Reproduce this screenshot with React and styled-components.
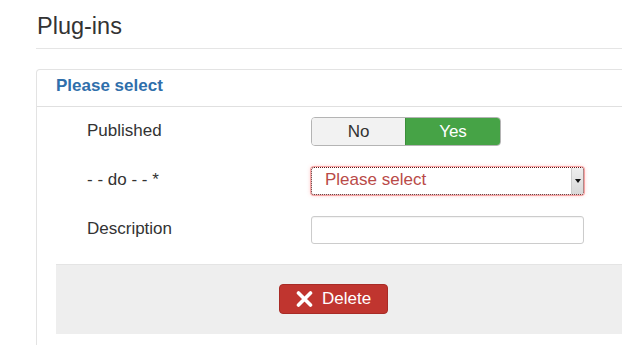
import React from "react";
import styled, { createGlobalStyle } from "styled-components";

const Global = createGlobalStyle`
  html, body { margin: 0; padding: 0; background: #fff; overflow: hidden; }
  body { font-family: "Liberation Sans", Arial, sans-serif; color: #333; }
`;

const Page = styled.div`
  width: 622px;
  height: 345px;
  overflow: hidden;
  padding: 11px 0 0 36px;
  box-sizing: border-box;
`;

const Title = styled.h1`
  margin: 0 0 0 1px;
  font-size: 23.5px;
  font-weight: 400;
  line-height: 30px;
  color: #333;
`;

const Rule = styled.div`
  height: 1px;
  background: #e5e5e5;
  margin: 7px -10px 20px 0;
`;

const Panel = styled.section`
  width: 640px;
  border: 1px solid #e3e3e3;
  border-radius: 4px 0 0 0;
  border-bottom: none;
  height: 400px;
  box-sizing: border-box;
`;

const PanelHeader = styled.div`
  height: 37px;
  line-height: 32px;
  padding: 0 0 4px 19px;
  box-sizing: border-box;
  border-bottom: 1px solid #e0e0e0;
  font-size: 17px;
  font-weight: 700;
  color: #2f6fab;
`;

const Body = styled.div`
  padding-top: 10px;
`;

const Row = styled.div`
  display: flex;
  align-items: center;
  height: ${(p) => p.h}px;
  margin-bottom: ${(p) => p.mb}px;
`;

const Label = styled.div`
  width: 224px;
  padding: 0 0 2px 50px;
  font-size: 17px;
  color: #333;
`;

const Toggle = styled.div`
  display: flex;
  height: 29px;
  box-sizing: border-box;
  border: 1px solid #b4b4b4;
  border-radius: 4px;
  overflow: hidden;
`;

const ToggleOption = styled.div`
  width: ${(p) => p.w}px;
  display: flex;
  align-items: center;
  justify-content: center;
  font-size: 17px;
  background: ${(p) => (p.active ? "#46a346" : "#f2f2f2")};
  color: ${(p) => (p.active ? "#fff" : "#333")};
  ${(p) => (p.active ? "border-left: 1px solid #3a8e3a;" : "")}
`;

const Select = styled.div`
  position: relative;
  width: 273px;
  height: 28px;
  box-sizing: border-box;
  border: 1px dotted #5a1414;
  border-radius: 3px;
  box-shadow: 0 0 0 1px rgba(240, 110, 110, 0.55), 0 0 4px rgba(255, 60, 60, 0.35);
  display: flex;
  align-items: center;
  padding-left: 13px;
  font-size: 17px;
  color: #b94a48;
  padding-bottom: 2px;
`;

const Arrow = styled.div`
  position: absolute;
  right: 0;
  top: 0;
  bottom: 0;
  width: 11px;
  background: linear-gradient(#eee, #d8d8d8);
  border-left: 1px solid #ccc;
  display: flex;
  align-items: center;
  justify-content: center;
  &::after {
    content: "";
    border-left: 3px solid transparent;
    border-right: 3px solid transparent;
    border-top: 4px solid #111;
  }
`;

const TextInput = styled.input`
  width: 273px;
  height: 28px;
  box-sizing: border-box;
  border: 1px solid #ccc;
  border-radius: 3px;
  margin: 0;
  padding: 0 6px;
  font-size: 17px;
  font-family: inherit;
  box-shadow: inset 0 1px 1px rgba(0, 0, 0, 0.05);
`;

const Footer = styled.div`
  margin-left: 19px;
  border-top: 1px solid #e4e4e4;
  background: #eeeeee;
  height: 70px;
  box-sizing: border-box;
  padding: 19px 0 0 223px;
`;

const DeleteButton = styled.button`
  width: 109px;
  height: 30px;
  box-sizing: border-box;
  border: 1px solid #a82b26;
  border-radius: 4px;
  background: #c0352f;
  color: #fff;
  font-family: inherit;
  font-size: 17px;
  display: flex;
  align-items: center;
  padding: 0 0 0 16px;
  gap: 9px;
`;

export default function App() {
  return (
    <>
      <Global />
      <Page>
        <Title>Plug-ins</Title>
        <Rule />
        <Panel>
          <PanelHeader>Please select</PanelHeader>
          <Body>
            <Row h={29} mb={21}>
              <Label>Published</Label>
              <Toggle>
                <ToggleOption w={93}>No</ToggleOption>
                <ToggleOption w={94} active>Yes</ToggleOption>
              </Toggle>
            </Row>
            <Row h={28} mb={21}>
              <Label>- - do - - *</Label>
              <Select>
                Please select
                <Arrow />
              </Select>
            </Row>
            <Row h={28} mb={20}>
              <Label>Description</Label>
              <TextInput type="text" />
            </Row>
          </Body>
          <Footer>
            <DeleteButton>
              <svg width="17" height="16" viewBox="0 0 17 16">
                <path d="M2.5 2 L14.5 14 M14.5 2 L2.5 14" stroke="#fff" strokeWidth="3.6" strokeLinecap="round" />
              </svg>
              Delete
            </DeleteButton>
          </Footer>
        </Panel>
      </Page>
    </>
  );
}
